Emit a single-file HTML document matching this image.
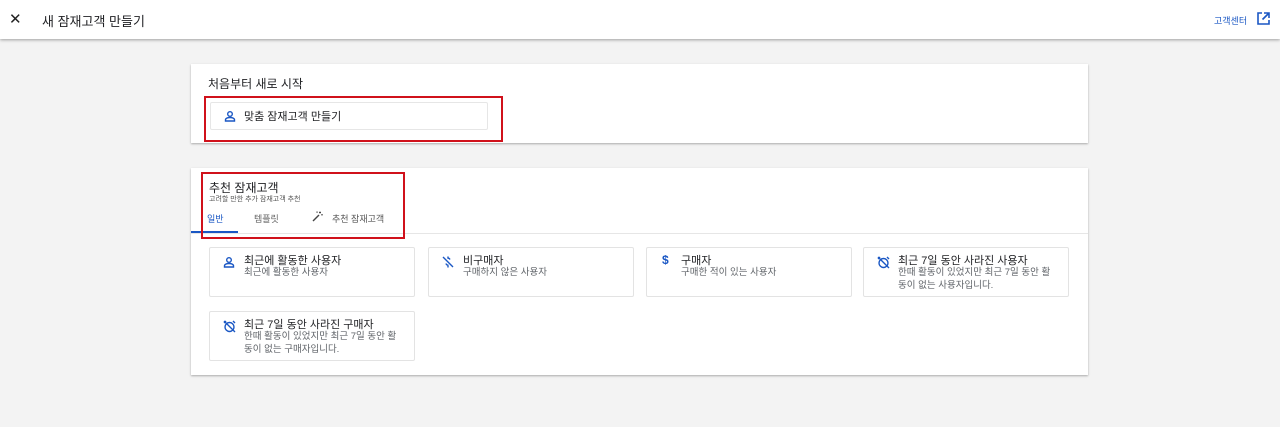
<!DOCTYPE html>
<html><head><meta charset="utf-8"><style>
*{box-sizing:border-box;margin:0;padding:0}
body{width:1280px;height:427px;background:#f3f3f3;font-family:"Liberation Sans","Noto Sans CJK KR",sans-serif;position:relative;overflow:hidden;color:#202124}
.hdr{position:absolute;left:0;top:0;width:1280px;height:39px;background:#fff;box-shadow:0 1px 3px rgba(0,0,0,.35)}
.abs{position:absolute}
.card{position:absolute;left:191px;width:897px;background:#fff;box-shadow:0 1px 2px rgba(0,0,0,.3)}
.red{position:absolute;border:2px solid #d0111b}
.tile{position:absolute;width:206px;height:50px;border:1px solid #e3e3e3;border-radius:2px;background:#fff}
.tile .t{position:absolute;left:34px;top:4px;font-size:11px;color:#202124}
.tile .d{position:absolute;left:34px;top:18px;font-size:9.5px;line-height:13px;color:#5f6368;width:156px;word-break:break-all}
.tile svg{position:absolute;left:13px;top:8px}
</style></head><body>
<div class="hdr">
 <div class="abs" style="left:9px;top:10px;font-size:15px;color:#222">✕</div>
 <div class="abs" style="left:42px;top:11px;font-size:13px;color:#202124">새 잠재고객 만들기</div>
 <div class="abs" style="left:1214px;top:14px;font-size:9px;color:#1a57c4">고객센터</div>
 <svg class="abs" style="left:1257px;top:12px" width="13" height="13" viewBox="0 0 13 13" fill="none" stroke="#1a57c4" stroke-width="1.6"><path d="M5 1H1v11h11V8M7 1h5v5M12 1L5.5 7.5"/></svg>
</div>
<div class="card" style="top:64px;height:79px">
 <div class="abs" style="left:17px;top:11px;font-size:12px">처음부터 새로 시작</div>
 <div class="abs" style="left:19px;top:38px;width:278px;height:28px;border:1px solid #e6e6e6;border-radius:2px"></div>
 <svg class="abs" style="left:33px;top:46px" width="12" height="12" viewBox="0 0 12 12" fill="none" stroke="#1a57c4" stroke-width="1.4"><circle cx="6" cy="4" r="2.3"/><path d="M1.5 11v-1.2c0-1.3 2-2.3 4.5-2.3s4.5 1 4.5 2.3V11z"/></svg>
 <div class="abs" style="left:53px;top:44px;font-size:11px">맞춤 잠재고객 만들기</div>
</div>
<div class="red" style="left:204px;top:96px;width:299px;height:46px"></div>
<div class="card" style="top:168px;height:207px">
 <div class="abs" style="left:18px;top:11px;font-size:12px">추천 잠재고객</div>
 <div class="abs" style="left:18px;top:26px;font-size:7px;color:#555">고려할 만한 추가 잠재고객 추천</div>
 <div class="abs" style="left:16px;top:44px;font-size:9px;color:#1a57c4">일반</div>
 <div class="abs" style="left:63px;top:44px;font-size:9px;color:#666">템플릿</div>
 <svg class="abs" style="left:121px;top:43px" width="11" height="11" viewBox="0 0 11 11" fill="none" stroke="#444" stroke-width="1.4"><path d="M1 10l6-6"/><path d="M8 0.5v2M7 1.5h2M10 3v1.5M9.3 3.7h1.4M5 0.5v1.3M4.4 1.1h1.3" stroke-width="1"/></svg>
 <div class="abs" style="left:141px;top:44px;font-size:9px;color:#555">추천 잠재고객</div>
 <div class="abs" style="left:0;top:65px;width:897px;height:1px;background:#e6e6e6"></div>
 <div class="abs" style="left:0;top:63px;width:47px;height:2px;background:#1a57c4"></div>
</div>
<div class="red" style="left:201px;top:172px;width:204px;height:67px"></div>
<div class="tile" style="left:209px;top:247px"><svg width="12" height="12" viewBox="0 0 12 12" fill="none" stroke="#1a57c4" stroke-width="1.4"><circle cx="6" cy="4" r="2.3"/><path d="M1.5 11v-1.2c0-1.3 2-2.3 4.5-2.3s4.5 1 4.5 2.3V11z"/></svg><div class="t">최근에 활동한 사용자</div><div class="d">최근에 활동한 사용자</div></div>
<div class="tile" style="left:428px;top:247px"><svg width="12" height="12" viewBox="0 0 12 12" fill="none" stroke="#1a57c4" stroke-width="1.4"><path d="M1 1l10 10M8 3.5C7.5 2.5 6.5 2 5.5 2.3M4 7.5c.3 1.2 1.3 1.8 2.5 1.7M6 0.5v2M6 9.5v2"/></svg><div class="t">비구매자</div><div class="d">구매하지 않은 사용자</div></div>
<div class="tile" style="left:646px;top:247px"><div class="abs" style="left:15px;top:5px;font-size:12px;font-weight:bold;color:#1a57c4">$</div><div class="t">구매자</div><div class="d">구매한 적이 있는 사용자</div></div>
<div class="tile" style="left:863px;top:247px"><svg width="13" height="13" viewBox="0 0 13 13" fill="none" stroke="#1a57c4" stroke-width="1.4"><circle cx="6.5" cy="7" r="4.5"/><path d="M1 3l2-2M12 3l-2-2M1 1l11 11"/></svg><div class="t">최근 7일 동안 사라진 사용자</div><div class="d">한때 활동이 있었지만 최근 7일 동안 활동이 없는 사용자입니다.</div></div>
<div class="tile" style="left:209px;top:311px"><svg width="13" height="13" viewBox="0 0 13 13" fill="none" stroke="#1a57c4" stroke-width="1.4"><circle cx="6.5" cy="7" r="4.5"/><path d="M1 3l2-2M12 3l-2-2M1 1l11 11"/></svg><div class="t">최근 7일 동안 사라진 구매자</div><div class="d">한때 활동이 있었지만 최근 7일 동안 활동이 없는 구매자입니다.</div></div>
</body></html>
